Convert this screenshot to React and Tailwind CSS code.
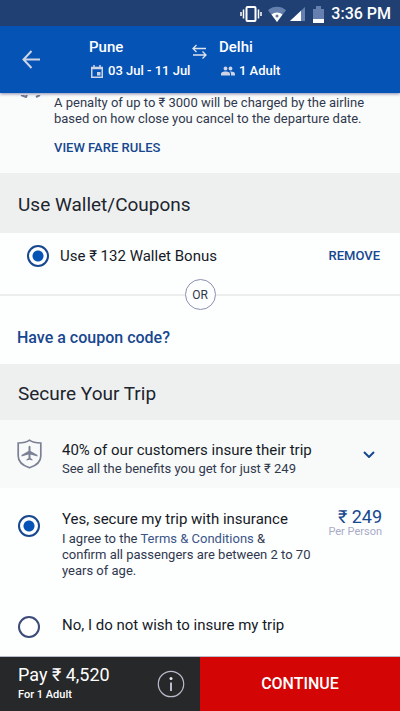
import React, { useState } from "react";

function StatusBar() {
  return (
    <div className="flex h-[26px] items-center justify-end bg-[#204073] pr-[9px] pt-[2px] text-white">
      <svg className="mr-[6px] h-4 w-[22px]" viewBox="0 0 22 16" fill="none" stroke="currentColor" aria-hidden="true">
        <rect x="6.5" y="1" width="9" height="14" rx="1" strokeWidth="2" />
        <path d="M3.5 3.500v9M18.500 3.500v9" strokeWidth="1.500" />
        <path d="M1 6v4M21 6v4" strokeWidth="1.500" />
      </svg>
      <svg className="mr-[3px] h-4 w-[18px]" viewBox="0 0 18 16" aria-hidden="true">
        <path d="M0 4.200C5 -.4 13 -.4 18 4.200L9 16Z" fill="#6580ae" />
        <path d="M3.500 8.500C6.500 5.800 11.500 5.800 14.500 8.500L9 16Z" fill="#fff" />
        <circle cx="9" cy="10" r="1.500" fill="#66779b" />
      </svg>
      <svg className="mr-2 h-4 w-4" viewBox="0 0 16 16" aria-hidden="true">
        <path d="M16 1V15H1Z" fill="#6580ae" />
        <path d="M12 4.700V15H1Z" fill="#fff" />
      </svg>
      <svg className="mr-[7px] h-[17px] w-[11px]" viewBox="0 0 11 17" aria-hidden="true">
        <path d="M0 3H3V0H8V3H11V13H0Z" fill="#6580ae" />
        <path d="M0 13H11V17H0Z" fill="#fff" />
      </svg>
      <span className="text-base font-medium leading-5">3:36 PM</span>
    </div>
  );
}

function TripHeader() {
  return (
    <header className="relative z-10 flex h-[67px] bg-[#0553b5] pt-3 text-white shadow-[0_1px_3px_rgba(60,65,120,0.6)]">
      <button type="button" aria-label="Back" className="ml-[22px] mt-3 h-[19px] w-[19px] text-[#ced4e4]">
        <svg viewBox="0 0 19 19" fill="none" stroke="currentColor" strokeWidth="2" aria-hidden="true">
          <path d="M9.500 1L1.500 9.500L9.500 18M1.500 9.500H18" />
        </svg>
      </button>
      <div className="ml-12 w-[103px]">
        <div className="text-[15px] font-medium leading-[18px]">Pune</div>
        <div className="mt-[6px] flex items-center gap-[5px] whitespace-nowrap text-[13px] font-medium leading-[18px]">
          <svg className="ml-[2px] h-[13px] w-3" viewBox="0 0 12 13" fill="none" aria-hidden="true">
            <path d="M.75 2.500H11.250V12.250H.75Z" stroke="#ced4e4" strokeWidth="1.500" />
            <path d="M1 3.500H11M3 0V3M9 0V3" stroke="#ced4e4" strokeWidth="1.500" />
            <path d="M6 7H9.500V10.500H6Z" fill="#ced4e4" />
          </svg>
          03 Jul - 11 Jul
        </div>
      </div>
      <svg className="mt-[6px] h-4 w-[15px]" viewBox="0 0 15 16" fill="none" stroke="#dfe4ee" strokeWidth="1.300" aria-hidden="true">
        <path d="M4.500 1L1 4.500L4.500 8M1 4.500H14M10.500 7.500L14 11L10.500 14.500M14 11H1" />
      </svg>
      <div className="ml-3">
        <div className="text-[15px] font-medium leading-[18px]">Delhi</div>
        <div className="mt-[6px] flex items-center gap-1 text-[13px] font-medium leading-[18px]">
          <svg className="ml-[2px] h-[10px] w-[14px]" viewBox="0 0 14 10" fill="#ced4e4" aria-hidden="true">
            <circle cx="4.500" cy="2.500" r="1.900" />
            <circle cx="9.500" cy="2.500" r="1.900" />
            <path d="M0 9.500V8C0 6 3 5.500 4.500 5.500S9 6 9 8V9.500ZM10 9.500V8C10 7 9.500 6.200 8.800 5.600C11 5.300 14 6 14 8V9.500Z" />
          </svg>
          1 Adult
        </div>
      </div>
    </header>
  );
}

function Radio({ id, name, checked, onChange }) {
  return (
    <input
      id={id}
      type="radio"
      name={name}
      checked={checked}
      onChange={onChange}
      className="h-[22px] w-[22px] shrink-0 appearance-none rounded-full border-2 border-[#3c4b78] bg-white checked:border-[#17478f] checked:bg-[radial-gradient(circle,#0553b5_5px,#fff_6px)]"
    />
  );
}

function SectionTitle({ children }) {
  return <h2 className="bg-[#eef0f0] px-[18px] text-[19px] text-[#20242d]">{children}</h2>;
}

export default function App() {
  const [insured, setInsured] = useState(true);
  return (
    <div className="flex min-h-screen flex-col bg-[#fdfefe] font-['Roboto','Noto_Sans',sans-serif] text-[#151a26]">
      <StatusBar />
      <TripHeader />
      <main className="grow">
        <section className="flex h-20 bg-[#fafcfb] pt-[2px]">
          <svg className="ml-5 h-[3px] w-[22px] shrink-0" viewBox="0 0 22 3" fill="none" stroke="#747a91" strokeWidth="2" aria-hidden="true">
            <path d="M1 0L6 2L7 0M16 2L20 0" />
          </svg>
          <div className="ml-3">
            <p className="text-[13px] leading-4 text-[#30384e]">
              A penalty of up to ₹ 3000 will be charged by the airline based on how close you cancel to the departure date.
            </p>
            <a href="#fare-rules" className="mt-3 block text-[13px] font-medium leading-[18px] text-[#17478f]">
              VIEW FARE RULES
            </a>
          </div>
        </section>

        <SectionTitle>
          <span className="block pb-4 pt-5 leading-6">Use Wallet/Coupons</span>
        </SectionTitle>
        <section>
          <div className="flex h-[46px] items-center pl-[27px] pr-5">
            <Radio id="wallet" name="wallet" checked onChange={() => {}} />
            <label htmlFor="wallet" className="ml-[11px] grow text-[15px]">
              Use ₹ 132 Wallet Bonus
            </label>
            <button type="button" className="text-[13px] font-medium text-[#17478f]">
              REMOVE
            </button>
          </div>
          <div className="flex items-center">
            <div className="h-[2px] grow bg-[#eceeee]" />
            <span className="flex h-[31px] w-[31px] items-center justify-center rounded-full border border-[#8b90b0] text-xs text-[#30384e]">
              OR
            </span>
            <div className="h-[2px] grow bg-[#eceeee]" />
          </div>
          <div className="px-[17px] pb-4 pt-[18px]">
            <a href="#coupon" className="block text-base font-medium leading-5 text-[#17478f]">
              Have a coupon code?
            </a>
          </div>
        </section>

        <SectionTitle>
          <span className="block pb-[14px] pt-[18px] leading-6">Secure Your Trip</span>
        </SectionTitle>
        <section>
          <div className="flex h-[68px] items-start bg-[#f8faf9] pl-[17px] pr-[25px]">
            <svg className="mt-[19px] h-[30px] w-[25px] shrink-0" viewBox="0 0 25 30" fill="none" aria-hidden="true">
              <path d="M1.200 4C5 4 9.500 3.500 12.500 1.200C15.500 3.500 20 4 23.800 4V17C23.800 23 18 27 12.500 28.800C7 27 1.200 23 1.200 17Z" stroke="#7b8094" strokeWidth="1.700" />
              <path d="M11.500 7.800Q12.500 5.500 13.500 7.800V12L20.500 16V17.500L13.500 15.500V19L15.500 20.500V21.500L12.500 20.800L9.500 21.500V20.500L11.500 19V15.500L4.500 17.500V16L11.500 12Z" fill="#7b8094" />
            </svg>
            <div className="ml-5 mt-[21px] grow">
              <div className="text-[15px] leading-[18px]">40% of our customers insure their trip</div>
              <p className="mt-px text-[13px] leading-[18px] text-[#30384e]">See all the benefits you get for just ₹ 249</p>
            </div>
            <button type="button" aria-label="Show benefits" className="mt-[31px] h-[7px] w-3">
              <svg viewBox="0 0 12 7" fill="none" stroke="#17478f" strokeWidth="2" aria-hidden="true">
                <path d="M1 1L6 6L11 1" />
              </svg>
            </button>
          </div>

          <div className="flex items-start pb-[37px] pl-[18px] pr-[18px] pt-[21px]">
            <div className="mt-[6px] flex">
              <Radio id="insure-yes" name="insurance" checked={insured} onChange={() => setInsured(true)} />
            </div>
            <div className="ml-[22px] min-w-0 grow">
              <label htmlFor="insure-yes" className="block text-[15px] leading-5">
                Yes, secure my trip with insurance
              </label>
              <p className="mt-[2px] text-[13px] leading-4 text-[#30384e]">
                <span>I agree to the </span>
                <a href="#terms" className="text-[#3b5588]">Terms &amp; Conditions</a>
                <span> &amp;</span>
                <br />
                <span>confirm all passengers are between 2 to 70 years of age.</span>
              </p>
            </div>
            <div className="shrink-0 whitespace-nowrap text-right">
              <div className="text-lg leading-4 text-[#17478f]">₹ 249</div>
              <div className="text-[11px] leading-[14px] text-[#a9acc6]">Per Person</div>
            </div>
          </div>

          <div className="flex items-start pb-[18px] pl-[18px]">
            <Radio id="insure-no" name="insurance" checked={!insured} onChange={() => setInsured(false)} />
            <label htmlFor="insure-no" className="ml-[22px] text-[15px] leading-[18px]">
              No, I do not wish to insure my trip
            </label>
          </div>
        </section>
      </main>

      <footer className="grid h-[55px] grid-cols-2 border-t border-[#b9bccb] text-white">
        <div className="flex items-center bg-[#272829] pl-[18px] pr-[15px]">
          <div className="grow">
            <div className="text-lg leading-[22px]">Pay ₹ 4,520</div>
            <div className="text-[11px] font-medium leading-[18px]">For 1 Adult</div>
          </div>
          <button type="button" aria-label="Fare details" className="h-7 w-7">
            <svg viewBox="0 0 28 28" fill="none" stroke="#b9bccb" aria-hidden="true">
              <circle cx="14" cy="14" r="12.700" strokeWidth="1.200" />
              <path d="M14 12.500V21" strokeWidth="2" />
              <circle cx="14" cy="8.500" r="1.500" fill="#e8eaf2" stroke="none" />
            </svg>
          </button>
        </div>
        <button type="button" className="bg-[#d30505] text-base font-medium">
          CONTINUE
        </button>
      </footer>
    </div>
  );
}
